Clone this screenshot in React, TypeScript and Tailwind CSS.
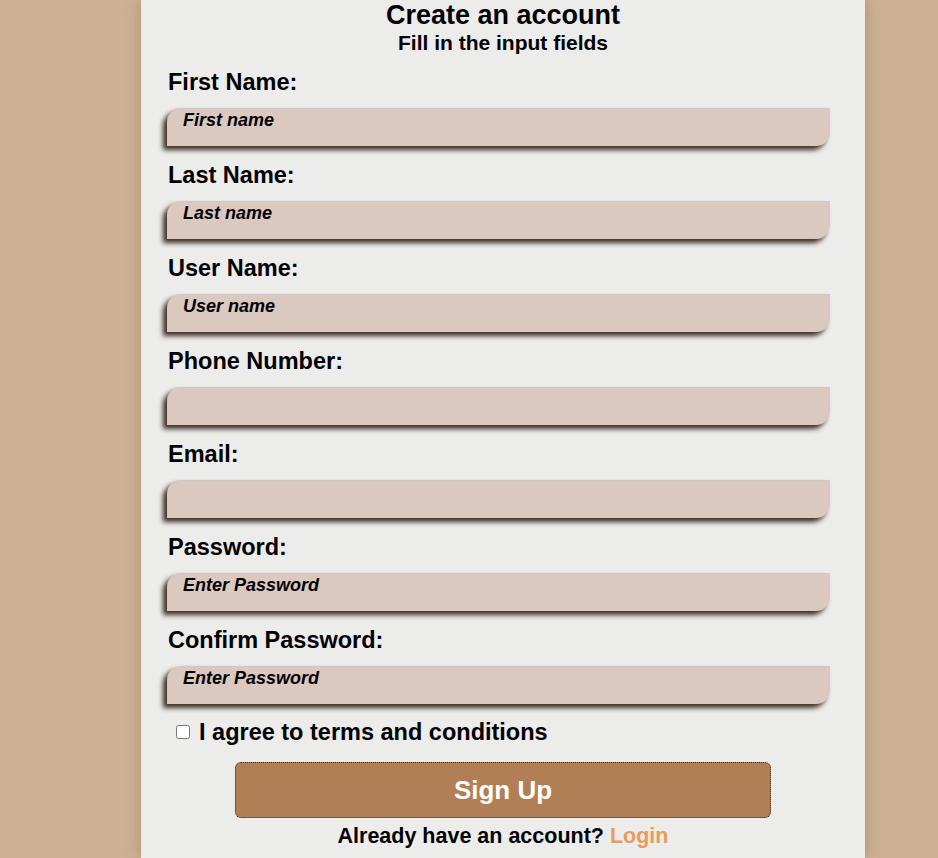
import React from 'react';

const fields = [
    { label: 'First Name:', placeholder: 'First name' },
    { label: 'Last Name:', placeholder: 'Last name' },
    { label: 'User Name:', placeholder: 'User name' },
    { label: 'Phone Number:', placeholder: '' },
    { label: 'Email:', placeholder: '' },
    { label: 'Password:', placeholder: 'Enter Password' },
    { label: 'Confirm Password:', placeholder: 'Enter Password' },
];

export default function App() {
    return (
        <div className="min-h-screen bg-[#cdb194] font-['Liberation_Sans',Arial,sans-serif] text-black">
            <div className="ml-[141px] w-[724px] min-h-[858px] bg-[#ececea] shadow-[0_0_14px_#a88d70] px-[26px]">
                {/* Heading */}
                <div className="text-center">
                    <h1 className="text-[27px] leading-[30px] font-bold">Create an account</h1>
                    <h2 className="text-[21px] leading-[24px] font-bold mt-[1px]">Fill in the input fields</h2>
                </div>

                {/* Fields */}
                <div>
                    {fields.map((f, idx) => (
                        <div key={idx} className={idx === 0 ? 'mt-[14px]' : 'mt-[16px]'}>
                            <label className="block pl-[1px] text-[23.5px] leading-[27px] font-bold">{f.label}</label>
                            <input
                                type="text"
                                placeholder={f.placeholder}
                                className="mt-[12px] block w-[663px] h-[38px] pt-0 pb-[14px] pl-[16px] bg-[#dbc8bf] rounded-tl-[14px] rounded-br-[14px] border-t border-[#cfc9c6] shadow-[-4px_4px_5px_#3d2e25] text-[18px] italic font-bold placeholder:text-black outline-none"
                            />
                        </div>
                    ))}
                </div>

                {/* Terms */}
                <label className="mt-[14px] flex items-center pl-[9px] text-[23.5px] leading-[28px] font-bold">
                    <input type="checkbox" className="w-[14px] h-[14px] mr-[9px]" />
                    I agree to terms and conditions
                </label>

                {/* Submit */}
                <div className="flex justify-center mt-[16px]">
                    <button className="w-[536px] h-[56px] rounded-[6px] border border-dotted border-[#3a2a1e] bg-[#b07f55] text-white text-[26px] font-bold">
                        Sign Up
                    </button>
                </div>

                <p className="text-center text-[21.5px] leading-[24px] font-bold mt-[6px] pb-[8px]">
                    Already have an account? <span className="text-[#eb9a5c]">Login</span>
                </p>
            </div>
        </div>
    );
}
